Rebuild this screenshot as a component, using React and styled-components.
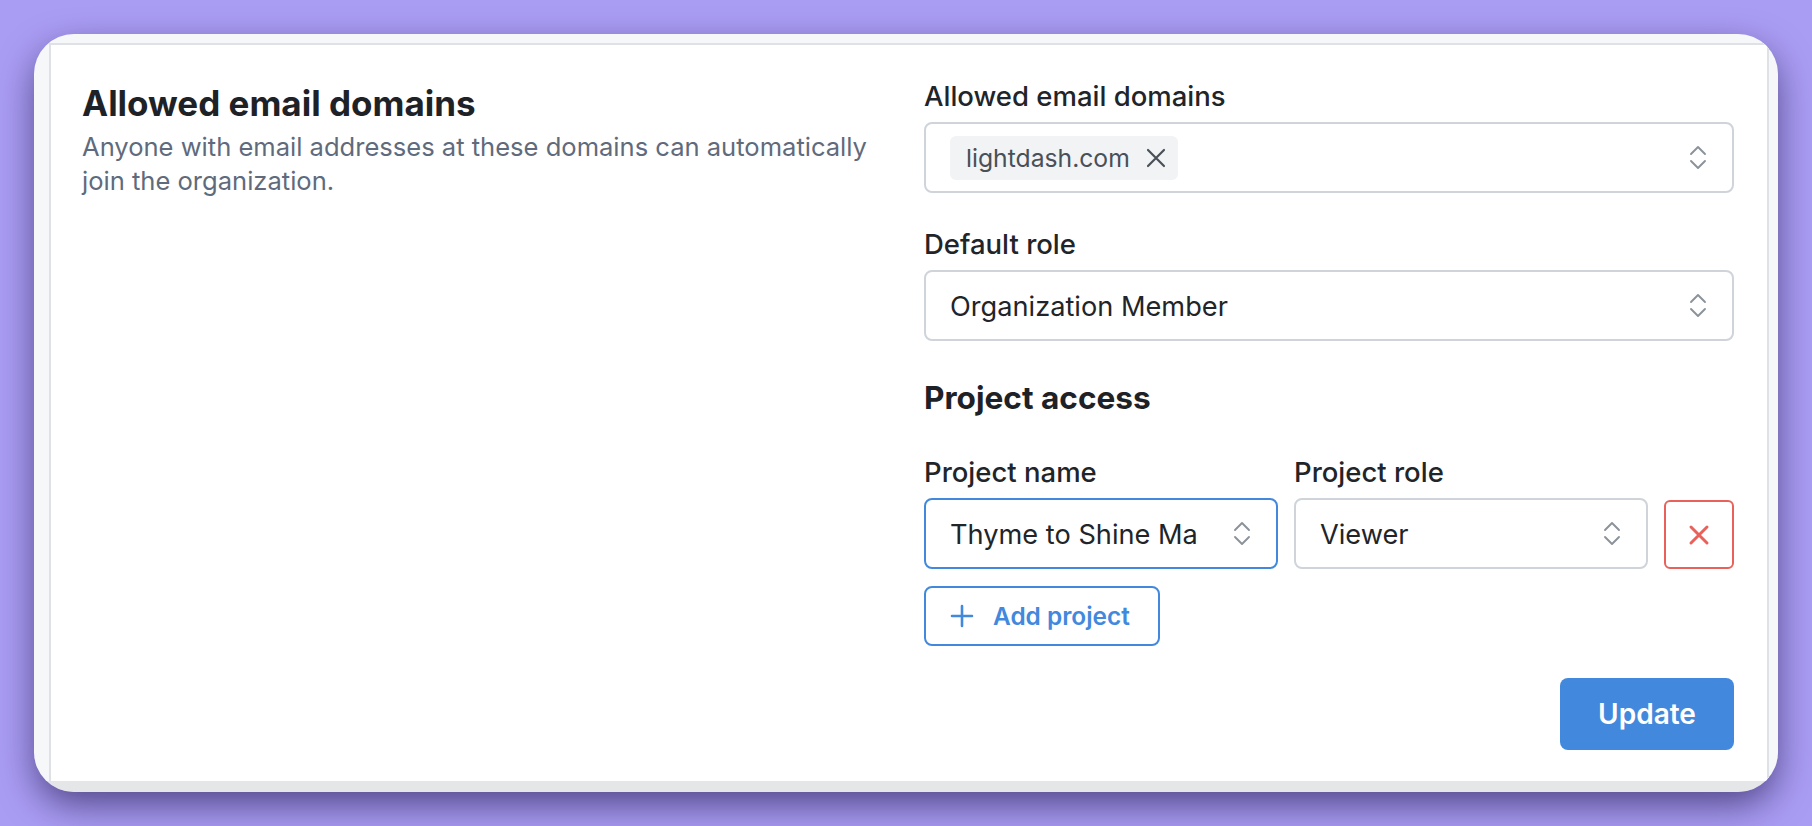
import React from "react";
import styled, { createGlobalStyle } from "styled-components";

const GlobalStyle = createGlobalStyle`
  html, body {
    margin: 0;
    padding: 0;
    width: 1812px;
    height: 826px;
    overflow: hidden;
    background: #a99cf3;
    font-family: Inter, "Liberation Sans", sans-serif;
    color: #212529;
  }
  * {
    box-sizing: border-box;
  }
`;

const Page = styled.div`
  width: 1812px;
  height: 826px;
  padding: 34px;
`;

const Frame = styled.div`
  width: 1744px;
  height: 758px;
  border-radius: 40px;
  background: linear-gradient(#f6f7f9 calc(100% - 11px), #e5e6e8 calc(100% - 11px));
  padding: 9px 9px 11px 15px;
  overflow: hidden;
  box-shadow: 0 14px 36px -2px rgba(20, 12, 60, 0.6);
`;

const Panel = styled.div`
  height: 100%;
  background: #fff;
  border: 2px solid #dee2e6;
  border-bottom: 0;
  display: grid;
  grid-template-columns: 1fr 810px;
  gap: 40px;
  padding: 34px 33px 27px 31px;
`;

const Intro = styled.div`
  display: flex;
  flex-direction: column;
`;

const Title = styled.h2`
  margin: 2px 0 5px;
  font-size: 35px;
  font-weight: 700;
  line-height: 44px;
  color: #1e2226;
`;

const Description = styled.p`
  margin: 0;
  font-size: 25.55px;
  line-height: 33.5px;
  color: #5f6b7c;
`;

const Form = styled.div`
  display: flex;
  flex-direction: column;
`;

const Field = styled.div`
  display: flex;
  flex-direction: column;
  margin-bottom: ${({ $gap }) => $gap || 0}px;
  flex: ${({ $grow }) => ($grow ? 1 : "none")};
  min-width: 0;
`;

const Label = styled.label`
  font-size: 27.5px;
  font-weight: 500;
  line-height: 34px;
  margin-bottom: 9px;
  color: #212529;
`;

const SelectBox = styled.div`
  height: 71px;
  border: 2px solid ${({ $focused }) => ($focused ? "#4289dd" : "#ced4da")};
  border-radius: 8px;
  background: #fff;
  display: flex;
  align-items: center;
  justify-content: space-between;
  padding: 0 22px 0 24px;
  font-size: 27.2px;
  color: #212529;
`;

const Value = styled.span`
  white-space: nowrap;
  overflow: hidden;
  padding-top: 2px;
`;

const Tag = styled.span`
  display: inline-flex;
  align-items: center;
  gap: 15px;
  height: 44px;
  padding: 0 11px 0 16px;
  border-radius: 6px;
  background: #f1f3f5;
  font-size: 24.7px;
  color: #495057;
`;

const Selector = styled.svg`
  width: 24px;
  height: 28px;
  flex: none;
  fill: none;
  stroke: #8b929a;
  stroke-width: 1.9;
  stroke-linecap: round;
  stroke-linejoin: round;
`;

const TagClose = styled.svg`
  width: 22px;
  height: 22px;
  fill: none;
  stroke: #495057;
  stroke-width: 2.2;
  stroke-linecap: round;
`;

const SectionTitle = styled.h3`
  margin: 0 0 37px;
  font-size: 31.6px;
  font-weight: 700;
  line-height: 40px;
  color: #1e2226;
`;

const ProjectRow = styled.div`
  display: flex;
  align-items: flex-end;
  gap: 16px;
`;

const DeleteButton = styled.button`
  width: 70px;
  height: 69px;
  flex: none;
  border: 2px solid #e8615a;
  border-radius: 6px;
  background: #fff;
  display: flex;
  align-items: center;
  justify-content: center;
  padding: 0;
`;

const DeleteIcon = styled.svg`
  width: 22px;
  height: 22px;
  fill: none;
  stroke: #e8615a;
  stroke-width: 3;
  stroke-linecap: round;
`;

const AddButton = styled.button`
  margin-top: 17px;
  width: 236px;
  height: 60px;
  border: 2px solid #4289dd;
  border-radius: 8px;
  background: #fff;
  color: #4289dd;
  font-family: inherit;
  font-size: 24.4px;
  font-weight: 600;
  display: flex;
  align-items: center;
  gap: 19px;
  padding: 0 24px;
`;

const PlusIcon = styled.svg`
  width: 24px;
  height: 24px;
  flex: none;
  fill: none;
  stroke: #4289dd;
  stroke-width: 2.6;
  stroke-linecap: round;
`;

const Footer = styled.div`
  display: flex;
  justify-content: flex-end;
  margin-top: 32px;
`;

const UpdateButton = styled.button`
  width: 174px;
  height: 72px;
  border: 0;
  border-radius: 8px;
  background: #4289dd;
  color: #fff;
  font-family: inherit;
  font-size: 28px;
  font-weight: 600;
`;

const SelectorIcon = () => (
  <Selector viewBox="0 0 24 28">
    <path d="M5 10l7-7 7 7" />
    <path d="M5 17l7 7 7-7" />
  </Selector>
);

export default function App() {
  return (
    <>
      <GlobalStyle />
      <Page>
        <Frame>
          <Panel>
            <Intro>
              <Title>Allowed email domains</Title>
              <Description>
                Anyone with email addresses at these domains can automatically join the organization.
              </Description>
            </Intro>
            <Form>
              <Field $gap={34}>
                <Label>Allowed email domains</Label>
                <SelectBox>
                  <Tag>
                    lightdash.com
                    <TagClose viewBox="0 0 22 22">
                      <path d="M3 3l16 16M19 3L3 19" />
                    </TagClose>
                  </Tag>
                  <SelectorIcon />
                </SelectBox>
              </Field>
              <Field $gap={37}>
                <Label>Default role</Label>
                <SelectBox>
                  <Value>Organization Member</Value>
                  <SelectorIcon />
                </SelectBox>
              </Field>
              <SectionTitle>Project access</SectionTitle>
              <ProjectRow>
                <Field $grow>
                  <Label>Project name</Label>
                  <SelectBox $focused>
                    <Value>Thyme to Shine Ma</Value>
                    <SelectorIcon />
                  </SelectBox>
                </Field>
                <Field $grow>
                  <Label>Project role</Label>
                  <SelectBox>
                    <Value>Viewer</Value>
                    <SelectorIcon />
                  </SelectBox>
                </Field>
                <DeleteButton>
                  <DeleteIcon viewBox="0 0 22 22">
                    <path d="M3 3l16 16M19 3L3 19" />
                  </DeleteIcon>
                </DeleteButton>
              </ProjectRow>
              <AddButton>
                <PlusIcon viewBox="0 0 24 24">
                  <path d="M12 2v20M2 12h20" />
                </PlusIcon>
                Add project
              </AddButton>
              <Footer>
                <UpdateButton>Update</UpdateButton>
              </Footer>
            </Form>
          </Panel>
        </Frame>
      </Page>
    </>
  );
}
